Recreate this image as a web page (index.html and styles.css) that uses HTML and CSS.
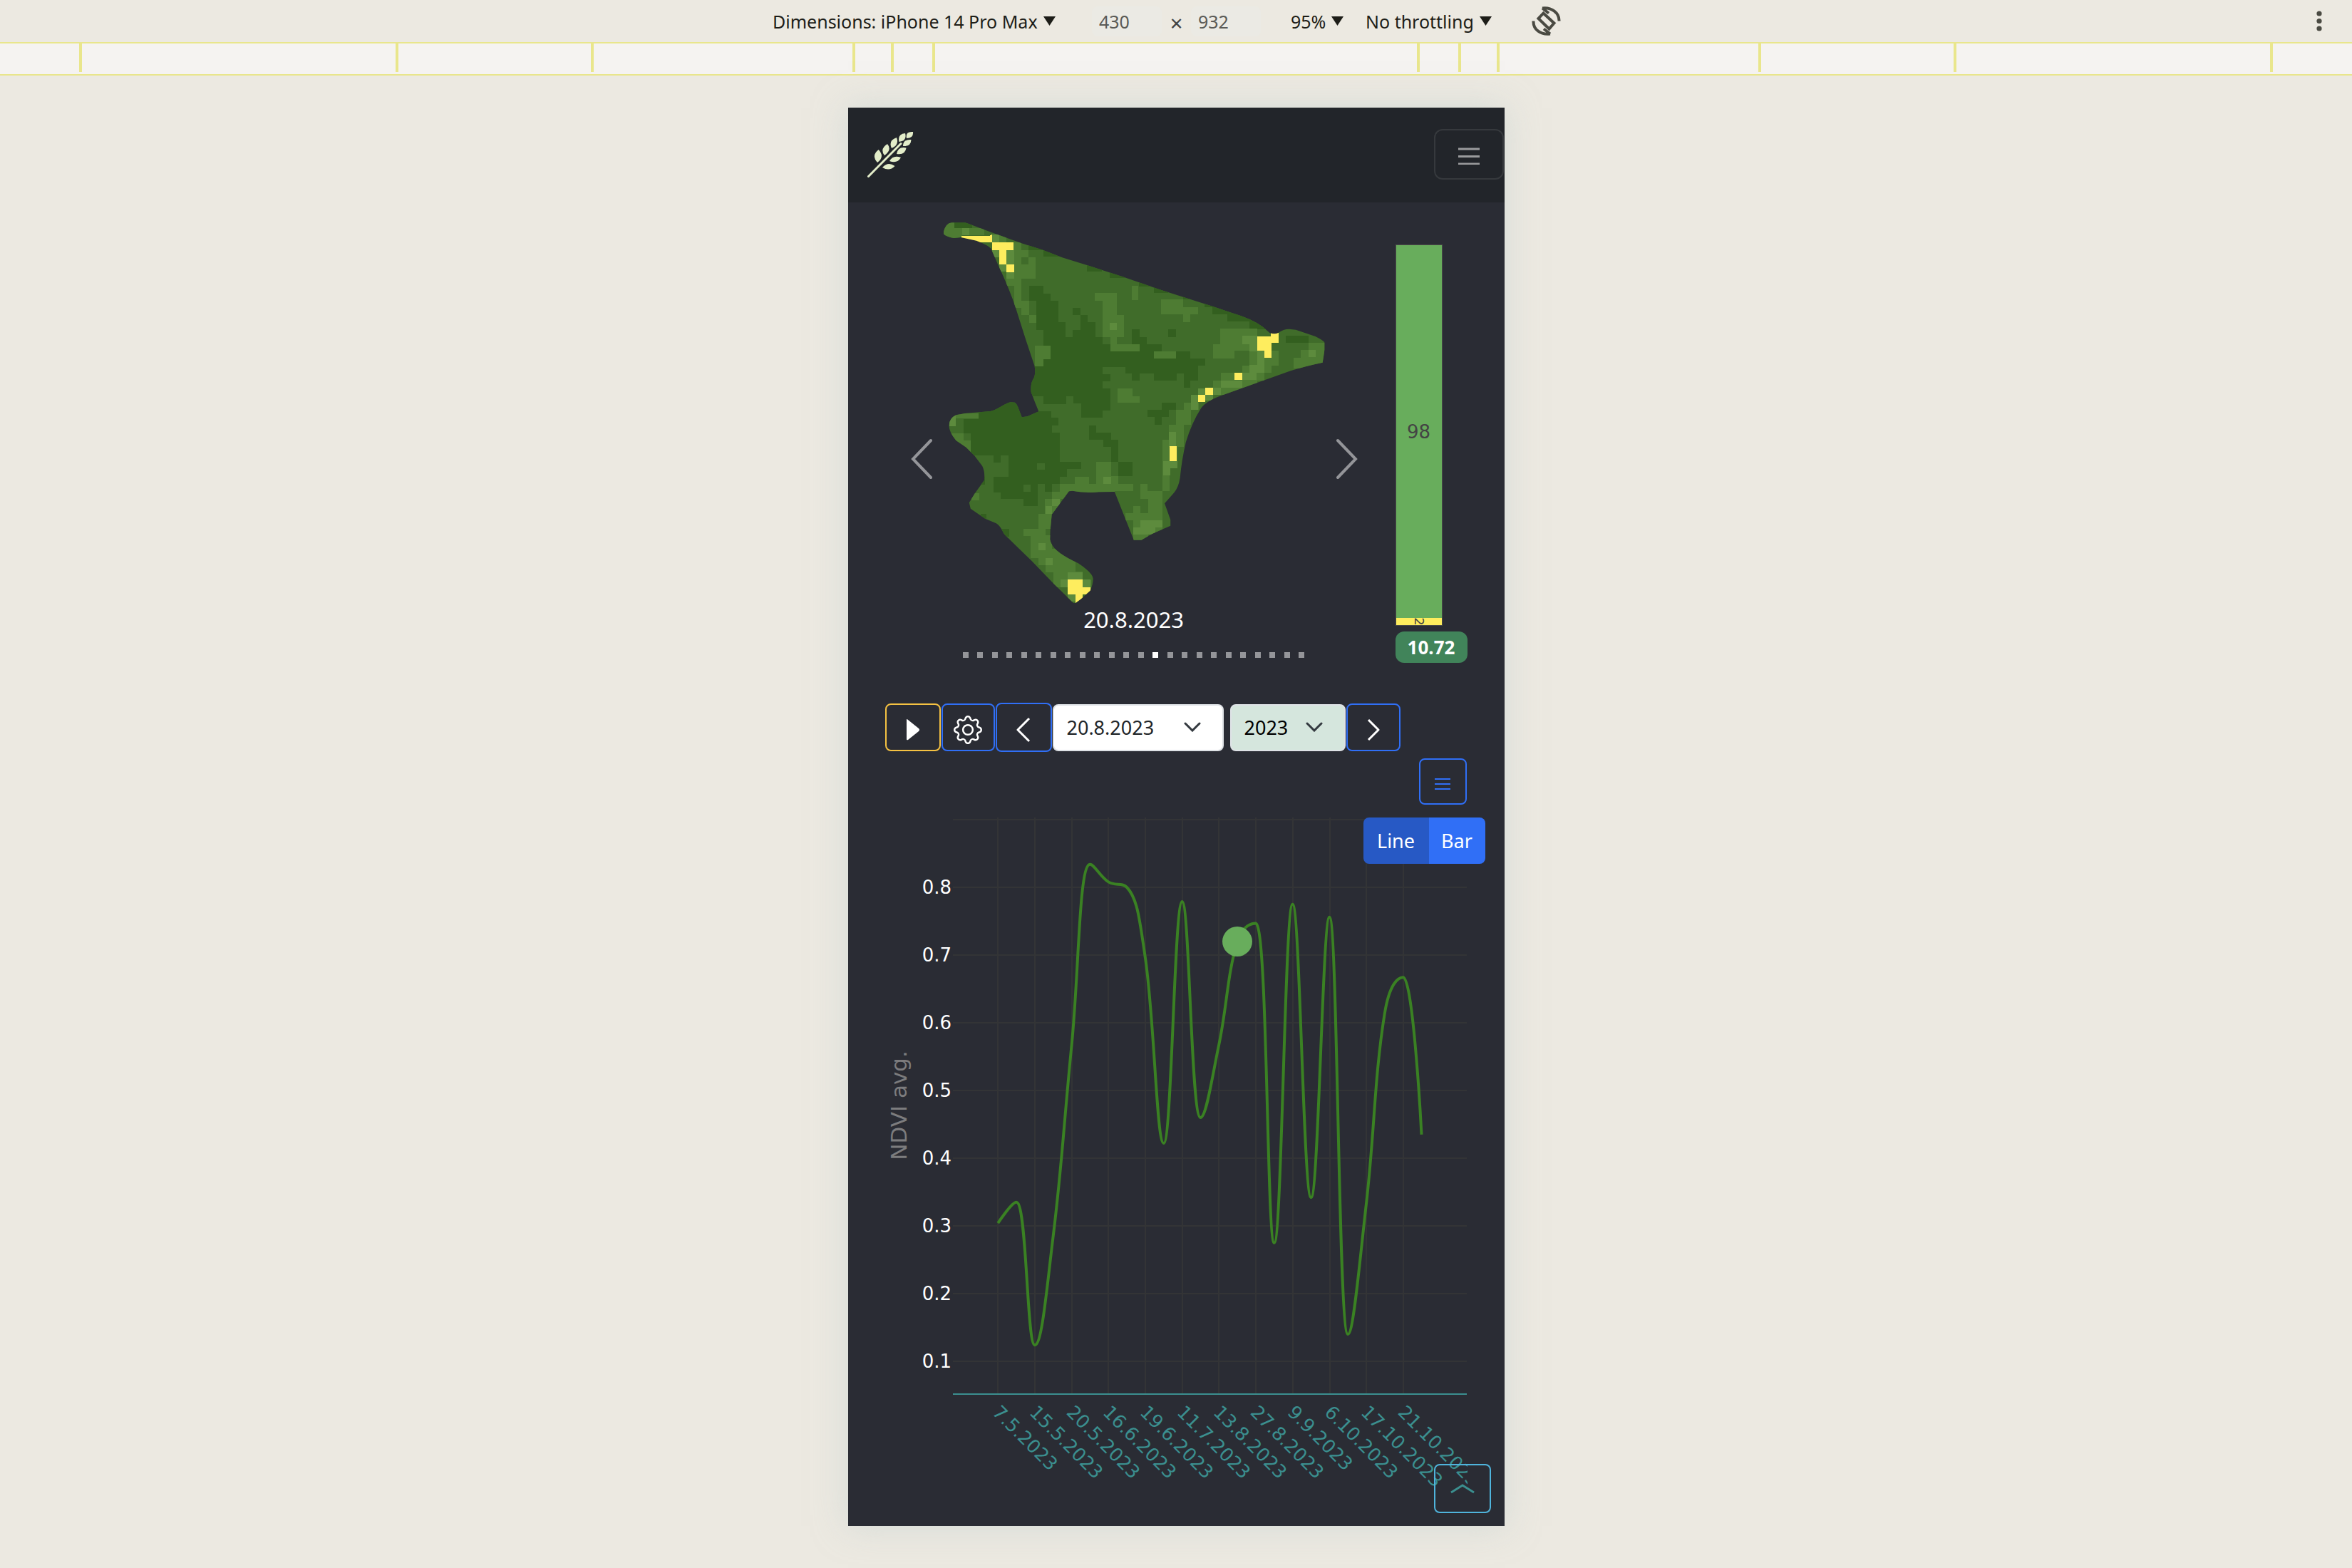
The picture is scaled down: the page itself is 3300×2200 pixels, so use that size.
FILE: index.html
```html
<!DOCTYPE html>
<html lang="en">
<head>
<meta charset="utf-8">
<title>Field NDVI</title>
<link rel="stylesheet" href="styles.css">
</head>
<body>
<div class="toolbar">
  <div class="toolbar-group">
    <button class="tool tool-device" type="button">Dimensions: iPhone 14 Pro Max<svg class="caret" viewBox="0 0 17 13"><path d="M0 0H17L8.500 13Z"/></svg></button>
    <input class="dim" type="text" value="430" aria-label="Width">
    <span class="times">×</span>
    <input class="dim" type="text" value="932" aria-label="Height">
    <button class="tool tool-zoom" type="button">95%<svg class="caret" viewBox="0 0 17 13"><path d="M0 0H17L8.500 13Z"/></svg></button>
    <button class="tool tool-throttle" type="button">No throttling<svg class="caret" viewBox="0 0 17 13"><path d="M0 0H17L8.500 13Z"/></svg></button>
    <button class="tool" type="button" aria-label="Rotate"><svg class="rotate" viewBox="0 0 41 41"><path d="M16.500 9.500L31.500 23.500L24.500 31.500L9.500 17Z M15 2.500C28 1 39 9 38.500 20.500M24 9.500L15 2.500 M26 38.500C12 40 2 32 2.500 20.500M17 31.500L26 38.500"/></svg></button>
  </div>
  <button class="tool tool-more" type="button" aria-label="More options"><svg class="dots" viewBox="0 0 8 30"><circle cx="4" cy="4" r="3.600"/><circle cx="4" cy="14.500" r="3.600"/><circle cx="4" cy="25" r="3.600"/></svg></button>
</div>
<div class="ruler">
  <span class="seg seg-start"></span><span class="seg seg-b"></span><span class="seg seg-c"></span><span class="seg seg-d"></span><span class="seg seg-e"></span><span class="seg seg-f"></span><span class="seg seg-e"></span><span class="seg seg-d"></span><span class="seg seg-c"></span><span class="seg seg-b"></span><span class="seg seg-end"></span>
</div>

<div class="device">
  <header class="navbar">
    <a href="#" class="brand" aria-label="Home">
      <svg class="logo" viewBox="0 0 66 66">
        <path d="M1.500 63.500L47 17.500" fill="none" stroke="#e3edc9" stroke-width="3" stroke-linecap="round"/>
        <path d="M14 44Q5 34 15.700 26Q25 36 14 44Z M24 34Q17 25 28 18Q35 26 24 34Z M34 24Q29 13 41 9Q45 20 34 24Z M44.500 15Q42 4 53 3Q56 14 44.500 15Z M55 10Q53 0 64 1Q65 10 55 10Z"/>
        <path d="M50 21Q50 11 61.500 12Q61 22 50 21Z M41 32Q43 21 54.500 23.500Q53 34 41 32Z M31 42Q36 33 47 37Q42 46 31 42Z M21 51Q29 42 38.500 49Q31 57 21 51Z"/>
      </svg>
    </a>
    <button class="toggler" type="button" aria-label="Toggle navigation"><svg class="burger" viewBox="0 0 30 24"><path d="M0 2H30M0 12.500H30M0 23H30"/></svg></button>
  </header>

  <section class="overview">
    <button class="arrow" type="button" aria-label="Previous image"><svg viewBox="0 0 30 58"><path d="M28 3L3 29L28 55"/></svg></button>
    <figure class="slide">
      <svg class="field" viewBox="150 50 1323 1626" preserveAspectRatio="none">
        <defs><clipPath id="outline"><path d="M157 105Q165 68 185 66L232 66L320 106L425 153L495 180L565 213L650 245L780 297L900 348L1085 420L1150 447Q1215 470 1255 505L1278 530Q1295 538 1308 530Q1325 514 1345 514L1368 517L1435 545Q1455 556 1467 570L1467 600L1460 655Q1400 670 1350 690L1240 738L1110 795Q1055 820 1040 852Q1010 910 990 990Q975 1070 970 1140Q965 1180 950 1202L917 1248L937 1317L937 1342L875 1375L837 1402L811 1402L745 1199L690 1200Q650 1205 600 1195L588 1197L529 1295L524 1360L523 1400Q528 1430 555 1455Q580 1478 620 1500Q670 1540 671 1565Q671 1590 661 1615L630 1650L610 1668L604 1668L535 1585L460 1490L380 1395Q365 1380 360 1365Q350 1340 338 1332L300 1312L250 1270L245 1245L265 1205L297 1150Q300 1115 290 1090L262 1045L235 1012L200 983Q175 945 176 920Q176 890 200 876L235 868L318 860Q335 855 355 840Q378 823 388 822L402 823Q408 828 412 840L426 885L445 882L484 861Q470 820 458 780Q455 745 465 725Q475 705 470 670L440 560L405 425Q385 350 345 245L320 175Q312 162 270 142L217 128L192 131Q165 125 157 113Z"/></clipPath></defs>
        <g clip-path="url(#outline)">
          <path class="veg" d="M150 50H1480V1680H150Z"/>
          <path class="veg-dense" d="M451 333H500V365H526V396H551V486H577V548H602V518H628V456H653V486H679V548H704V578H730V608H881V638H955V608H1006V638H1057V668H1031V730H1006V760H983V702H958V730H881V702H830V730H805V702H781V673H704V704H730V733H704V765H730V857H704V888H630V827H604V798H579V829H501V798H440V672H501V640H526V583H501V518H476V396H451Z
            M805 516H830V547H856V578H906V608H830V578H805Z M602 425h25v31h-25Z M930 516h25v31h-25Z M500 165h51v45h-51Z M450 150h50v31h-50Z M651 230h51v41h-51Z M728 260h51v40h-51Z M828 300h51v34h-51Z M879 320h51v43h-51Z M980 363h75v27h-75Z M1055 390h51v31h-51Z M1080 423h52v29h-52Z M1132 440h77v42h-77Z M1208 450h60v65h-60Z M1334 541h77v31h-77Z M195 60h61v30h-61Z
            M906 823H957V853H931V885H906V916H883V885H858V855H906Z M656 920H681V950H733V980H757V1073H806V1134H757V1073H733V1010H707V980H656Z M757 1073H806V1134H757Z
            M277 800H440V861H528V888H553V921H530V951H556V1073H630V1104H581V1137H556V1167H530V1198H506V1167H481V1260H431V1230H354V1202H328V1170H285V1137H380V1046H354V1076H328V1046H251V953H225V893H277Z M328 1137H300V1170H328Z M285 1292h20v25h-20Z M345 1355h37v32h-37Z"/>
          <path class="veg" d="M479 1078h26v28h-26Z M431 1168h25v31h-25Z"/>
          <path class="veg-light" d="M150 60H195V90H297V119H220V150H150Z M348 119h25v31h-25Z M397 150H424V181H448V212H473V303H424V394H451V456H424V425H399V333H374V303H399Z M451 456h25v31h-25Z M470 583H526V640H501V671H470Z M676 363H752V456H778V547H752V578H730V547H704V394H676Z M805 331h22v62h-22Z M904 390H980V421H1031V453H1006V486H980V453H904Z M730 578h100v30h-100Z M881 608h74v30h-74Z M756 765H806V796H832V825H756Z M1107 513H1235V605H1158V638H1083V577H1107Z M1208 605H1309V668H1285V697H1260V730H1235V760H1200V790H1083V730H1110V697H1183V668H1208Z
            M983 823H1035V853H1008V917H983V1010H960V1100H935V1195H909V981H932V917H957V853H983Z M1411 572H1470V680H1360V636H1385V603H1411Z M200 868H277V890H200Z M180 953H225V984H251V1050H225V1010H180Z M254 1205h25v30h-25Z
            M506 1230H530V1198H556V1167H607V1137H656V1167H681V1073H733V1134H757V1165H808V1196H745V1210H588V1230H560V1292H506Z M483 1293H530V1355H508V1382H530V1440H560V1460H610V1535H636V1570H665V1620H583V1600H534V1538H508V1508H483V1478H457V1384H431V1355H483Z
            M833 1165H857V1197H909V1375H860V1405H808V1318H782V1290H808V1259H833V1290H860V1228H833Z"/>
          <path class="veg" d="M424 212h24v31h-24Z"/>
          <path class="veg-sparse" d="M220 90h25v29h-25Z M323 117h25v33h-25Z M323 181h26v31h-26Z M374 181h25v62h-25Z M349 242h25v31h-25Z M374 272h25v31h-25Z M728 487h25v30h-25Z M1183 543h52v34h-52Z M1208 577h27v30h-27Z M1235 605h25v93h-25Z M1208 666h50v31h-50Z M1183 697h50v30h-50Z M1110 730h75v30h-75Z M1083 760h27v30h-27Z M1031 765h26v28h-26Z M1057 792h26v22h-26Z M1008 792h25v61h-25Z M1411 603h26v30h-26Z M176 876h24v47h-24Z M932 948h25v62h-25Z M911 1070h50v31h-50Z M911 1100h25v31h-25Z M707 1137h25v30h-25Z M530 1230h26v30h-26Z M507 1260h23v32h-23Z M483 1415h25v30h-25Z M507 1478h25v30h-25Z M583 1538h53v31h-53Z M559 1569h25v32h-25Z M636 1569h25v31h-25Z M583 1631h27v31h-27Z M833 1318h76v30h-76Z M809 1349h76v30h-76Z"/>
          <path class="veg-none" d="M219 121H315L323 117V150H219Z M323 150H397V181H374V243H349V181H323Z M374 243h26v31h-26Z M1235 544H1283V525H1308V573H1285V635H1259V604H1235Z M1158 698h25v30h-25Z M1057 760h26v31h-26Z M1031 791h26v31h-26Z M935 1008h23v62h-23Z M583 1569H636V1600H661V1631H636V1670H610V1631H583Z"/>
        </g>
      </svg>
      <figcaption class="caption">20.8.2023</figcaption>
      <div class="indicators">
        <i></i><i></i><i></i><i></i><i></i><i></i><i></i><i></i><i></i><i></i><i></i><i></i><i></i><i class="active"></i><i></i><i></i><i></i><i></i><i></i><i></i><i></i><i></i><i></i><i></i>
      </div>
    </figure>
    <button class="arrow" type="button" aria-label="Next image"><svg viewBox="0 0 30 58"><path d="M2 3L27 29L2 55"/></svg></button>
    <div class="stats">
      <div class="stack">
        <div class="stack-high">98</div>
        <div class="stack-low"><span>2</span></div>
      </div>
      <span class="badge">10.72</span>
    </div>
  </section>

  <div class="controls">
    <button class="btn btn-play" type="button" aria-label="Play"><svg width="22" height="32" viewBox="0 0 22 32"><path d="M2 2Q2 0 4 2L19 14Q21 16 19 18L4 30Q2 31 2 29Z" fill="#fff"/></svg></button>
    <button class="btn btn-gear" type="button" aria-label="Settings"><svg width="40" height="40" viewBox="0 0 16 16" fill="#fff"><path d="M8 4.754a3.246 3.246 0 1 0 0 6.492 3.246 3.246 0 0 0 0-6.492zM5.754 8a2.246 2.246 0 1 1 4.492 0 2.246 2.246 0 0 1-4.492 0z"/><path d="M9.796 1.343c-.527-1.790-3.065-1.790-3.592 0l-.094.319a.873.873 0 0 1-1.255.520l-.292-.160c-1.640-.892-3.433.902-2.540 2.541l.159.292a.873.873 0 0 1-.520 1.255l-.319.094c-1.790.527-1.790 3.065 0 3.592l.319.094a.873.873 0 0 1 .520 1.255l-.160.292c-.892 1.640.901 3.434 2.541 2.540l.292-.159a.873.873 0 0 1 1.255.520l.094.319c.527 1.790 3.065 1.790 3.592 0l.094-.319a.873.873 0 0 1 1.255-.520l.292.160c1.640.893 3.434-.902 2.540-2.541l-.159-.292a.873.873 0 0 1 .520-1.255l.319-.094c1.790-.527 1.790-3.065 0-3.592l-.319-.094a.873.873 0 0 1-.520-1.255l.160-.292c.893-1.640-.902-3.433-2.541-2.540l-.292.159a.873.873 0 0 1-1.255-.520l-.094-.319zm-2.633.283c.246-.835 1.428-.835 1.674 0l.094.319a1.873 1.873 0 0 0 2.693 1.115l.291-.160c.764-.415 1.600.420 1.184 1.185l-.159.292a1.873 1.873 0 0 0 1.116 2.692l.318.094c.835.246.835 1.428 0 1.674l-.319.094a1.873 1.873 0 0 0-1.115 2.693l.160.291c.415.764-.420 1.600-1.185 1.184l-.291-.159a1.873 1.873 0 0 0-2.693 1.116l-.094.318c-.246.835-1.428.835-1.674 0l-.094-.319a1.873 1.873 0 0 0-2.692-1.115l-.292.160c-.764.415-1.600-.420-1.184-1.185l.159-.291A1.873 1.873 0 0 0 1.945 8.930l-.319-.094c-.835-.246-.835-1.428 0-1.674l.319-.094A1.873 1.873 0 0 0 3.060 4.377l-.160-.292c-.415-.764.420-1.600 1.185-1.184l.292.159a1.873 1.873 0 0 0 2.692-1.115l.094-.319z"/></svg></button>
    <button class="btn btn-prev" type="button" aria-label="Previous date"><svg class="chev" width="20" height="36" viewBox="0 0 20 36"><path d="M18 2L2 18L18 34"/></svg></button>
    <span class="select select-date"><select aria-label="Date"><option>20.8.2023</option></select><svg width="24" height="14" viewBox="0 0 24 14"><path d="M2 2L12 12L22 2"/></svg></span>
    <span class="select select-year"><select aria-label="Year"><option>2023</option></select><svg width="24" height="14" viewBox="0 0 24 14"><path d="M2 2L12 12L22 2"/></svg></span>
    <button class="btn btn-next" type="button" aria-label="Next date"><svg class="chev" width="18" height="32" viewBox="0 0 18 32"><path d="M2 2L16 16L2 30"/></svg></button>
  </div>
  <div class="menu-row">
    <button class="btn btn-menu" type="button" aria-label="Chart menu"><svg width="22" height="18" viewBox="0 0 22 18"><path d="M0 2H22M0 9H22M0 16H22" stroke="#306ff6" stroke-width="2"/></svg></button>
  </div>

  <section class="chart">
    <div class="switch">
      <button type="button" class="on" aria-pressed="true">Line</button><button type="button" aria-pressed="false">Bar</button>
    </div>
    <svg class="plot" viewBox="1242 1140 817 960">
      <path class="grid" d="M1337 1151H2058M1337 1246H2058M1337 1341H2058M1337 1436H2058M1337 1531H2058M1337 1626H2058M1337 1721H2058M1337 1816H2058M1337 1911H2058
        M1400 1148V1956M1452 1148V1956M1504 1148V1956M1555 1148V1956M1607 1148V1956M1659 1148V1956M1710 1148V1956M1762 1148V1956M1814 1148V1956M1866 1148V1956M1917 1148V1956M1969 1148V1956"/>
      <path class="axis" d="M1337 1957H2058"/>
      <g class="y-labels">
        <text x="1335" y="1255">0.8</text><text x="1335" y="1350">0.7</text><text x="1335" y="1445">0.6</text><text x="1335" y="1540">0.5</text><text x="1335" y="1635">0.4</text><text x="1335" y="1730">0.3</text><text x="1335" y="1825">0.2</text><text x="1335" y="1920">0.1</text>
      </g>
      <text class="y-title" transform="translate(1272 1552) rotate(-90)">NDVI avg.</text>
      <path class="series" id="series"/>
      <circle cx="1736" cy="1322" r="21" fill="#68ad5c"/>
      <g class="x-labels">
        <text transform="translate(1391 1984) rotate(45)">7.5.2023</text>
        <text transform="translate(1443 1984) rotate(45)">15.5.2023</text>
        <text transform="translate(1495 1984) rotate(45)">20.5.2023</text>
        <text transform="translate(1546 1984) rotate(45)">16.6.2023</text>
        <text transform="translate(1598 1984) rotate(45)">19.6.2023</text>
        <text transform="translate(1650 1984) rotate(45)">11.7.2023</text>
        <text transform="translate(1701 1984) rotate(45)">13.8.2023</text>
        <text transform="translate(1753 1984) rotate(45)">27.8.2023</text>
        <text transform="translate(1805 1984) rotate(45)">9.9.2023</text>
        <text transform="translate(1857 1984) rotate(45)">6.10.2023</text>
        <text transform="translate(1908 1984) rotate(45)">17.10.2023</text>
        <text transform="translate(1960 1984) rotate(45)">21.10.2023</text>
      </g>
    </svg>
  </section>
  <button class="to-top" type="button" aria-label="Back to top"><svg width="36" height="14" viewBox="0 0 36 14"><path d="M2 12L18 2L34 12"/></svg></button>
</div>
<script src="chart.js"></script>
</body>
</html>
```

FILE: styles.css
```css
* { box-sizing: border-box; }
body {
  margin: 0;
  min-height: 100vh;
  background: #ece9e1;
  font-family: "Noto Sans", "Open Sans", sans-serif;
  font-size: 28px;
  color: #fff;
}
button, input, select { font: inherit; color: inherit; margin: 0; }
button { padding: 0; border: 0; background: none; cursor: pointer; }
svg { display: block; flex: none; }

/* emulator toolbar */
.toolbar {
  position: relative;
  display: flex;
  justify-content: center;
  align-items: center;
  height: 59px;
  color: #1d1d18;
  font-size: 25px;
}
.toolbar-group { display: flex; align-items: center; padding-right: 26px; }
.tool { display: flex; align-items: center; gap: 8px; white-space: nowrap; }
.tool-device { width: 448px; }
.tool-zoom { width: 105px; margin-left: 42px; }
.tool-throttle { width: 233px; }
.caret { width: 17px; height: 13px; fill: #1d1d18; }
.dim {
  width: 98px;
  height: 42px;
  padding: 0 10px;
  border: 0;
  border-radius: 8px;
  background: #ebeae4;
  color: #5a5a56;
}
.times { width: 41px; text-align: center; color: #444; font-size: 31px; line-height: 36px; padding-top: 4px; }
.rotate { width: 41px; height: 41px; fill: none; stroke: #4a4a42; stroke-width: 4; }
.tool-more { position: absolute; right: 42px; }
.dots { width: 8px; height: 30px; fill: #4a4a42; }

.ruler {
  display: flex;
  justify-content: center;
  height: 47px;
  border: solid #e9e68c;
  border-width: 2px 0;
  background: #f5f3f1;
  overflow: hidden;
}
.seg { flex: none; height: 40px; border-right: 4px solid #e9e68c; }
.seg:first-child { border-left: 4px solid #e9e68c; }
.seg-start { width: 448px; }
.seg-b { width: 274px; }
.seg-c { width: 367px; }
.seg-d { width: 54px; }
.seg-e { width: 58px; }
.seg-f { width: 680px; }
.seg-end { width: 444px; }

/* emulated device */
.device {
  position: relative;
  width: 921px;
  max-width: 100%;
  margin: 45px auto 0;
  padding-bottom: 42px;
  background: #2a2c34;
  box-shadow: 0 0 44px rgba(190, 205, 205, .5);
}
.navbar {
  display: flex;
  justify-content: space-between;
  align-items: center;
  padding: 30px 1px 32px 27px;
  background: #22252a;
}
.logo { width: 66px; height: 66px; fill: #e3edc9; }
.toggler {
  display: flex;
  align-items: center;
  justify-content: center;
  width: 98px;
  height: 71px;
  border: 2px solid #36393d;
  border-radius: 12px;
}
.burger { width: 30px; height: 24px; stroke: #9a9b9d; stroke-width: 3; margin-top: 5px; }

.overview { display: flex; padding: 23px 0 0 88px; }
.arrow { width: 30px; }
.arrow svg { width: 30px; height: 58px; fill: none; stroke: #949599; stroke-width: 4; stroke-linecap: round; }
.slide { width: 540px; margin: 0 14px 0 13px; padding-bottom: 58px; }
.field { width: 540px; height: 542px; shape-rendering: crispEdges; }
.veg { fill: #406c2a; }
.veg-dense { fill: #335f1f; }
.veg-light { fill: #4e7c33; }
.veg-sparse { fill: #5d8b3d; }
.veg-none { fill: #feed5e; }
.caption { font-size: 31px; line-height: 40px; text-align: center; }
.indicators { display: flex; justify-content: space-between; width: 480px; margin: 26px auto 0; }
.indicators i { width: 8px; height: 8px; background: #949599; }
.indicators .active { background: #fff; }

.stats { padding-top: 36px; margin-left: 53px; }
.stack { width: 66px; height: 535px; display: flex; flex-direction: column; border: 1px solid #4a4a4a; color: #444; font: 26px "DejaVu Sans", sans-serif; }
.stack-high { flex: 1; display: flex; align-items: center; justify-content: center; background: #68ad5c; }
.stack-low { height: 10px; display: flex; align-items: center; justify-content: center; background: #feed5e; font-size: 18px; line-height: 20px; }
.stack-low span { transform: rotate(90deg); }
.badge {
  display: block;
  margin-top: 8px;
  width: 101px;
  border-radius: 12px;
  background: #41845a;
  font-size: 26px;
  font-weight: 700;
  line-height: 44px;
  text-align: center;
}

.controls { display: flex; align-items: center; gap: 1px; padding: 5px 0 0 52px; height: 74px; }
.btn { display: flex; align-items: center; justify-content: center; height: 67px; border: 2px solid #306ff6; border-radius: 8px; }
.btn svg { margin-top: 6px; }
.chev { fill: none; stroke: #fff; stroke-width: 3; stroke-linejoin: round; }
.btn-play { width: 78px; border-color: #f5c242; }
.btn-gear { width: 75px; }
.btn-prev { width: 79px; height: 69px; }
.btn-next { width: 76px; }
.select { position: relative; }
.select select {
  appearance: none;
  width: 100%;
  height: 66px;
  padding: 0 18px;
  border: 2px solid #dee2e6;
  border-radius: 8px;
  background: #fff;
  color: #212529;
  font-size: 27px;
}
.select svg { position: absolute; top: 25px; right: 32px; pointer-events: none; fill: none; stroke: #343a40; stroke-width: 3; stroke-linecap: round; }
.select-date { width: 240px; margin-right: 8px; }
.select-year { width: 162px; }
.select-year select { background: #d5e6dd; color: #000; }

.menu-row { display: flex; justify-content: flex-end; padding: 9px 53px 10px 0; }
.btn-menu { width: 67px; height: 65px; }

.chart { position: relative; padding-left: 52px; }
.plot { width: 817px; height: 960px; overflow: hidden; }
.switch { position: absolute; top: 8px; right: 27px; display: flex; border-radius: 8px; overflow: hidden; }
.switch button { width: 79px; line-height: 65px; background: #306ff6; font-size: 27px; }
.switch .on { width: 92px; background: #2759c5; }
.grid { stroke: #333436; stroke-width: 2; fill: none; }
.axis { stroke: #3b8f8f; stroke-width: 2; }
.series { stroke: #3a8123; stroke-width: 4; fill: none; stroke-linejoin: round; }
.y-labels { font: 26px "DejaVu Sans", sans-serif; fill: #fff; text-anchor: end; }
.y-title { font: 31px "DejaVu Sans", sans-serif; fill: #7c7c7e; text-anchor: middle; }
.x-labels { font: 26px "DejaVu Sans", sans-serif; fill: #3b8f8f; }

.to-top {
  position: absolute;
  right: 19px;
  bottom: 18px;
  display: flex;
  align-items: center;
  justify-content: center;
  width: 80px;
  height: 69px;
  border: 2px solid #4fb4dc;
  border-radius: 8px;
}
.to-top svg { fill: none; stroke: #3b8f8f; stroke-width: 3; }
```

FILE: chart.js
```js
// Smoothed NDVI curve: control points are kept inside the box of each segment.
var values = [0.304, 0.335, 0.124, 0.285, 0.567, 0.834, 0.808, 0.800, 0.696, 0.422, 0.779, 0.460,
  0.568, 0.720, 0.747, 0.275, 0.775, 0.342, 0.756, 0.140, 0.333, 0.614, 0.667, 0.435];
var pts = values.map(function (v, i) {
  return [1400.2 + i * 25.84, 1246 + (0.8 - v) * 950];
});
function clamp(v, a, b) {
  return Math.max(Math.min(a, b), Math.min(Math.max(a, b), v));
}
var d = 'M' + pts[0].join(' ');
var c0 = pts[0];
for (var i = 1; i < pts.length; i++) {
  var p = pts[i], prev = pts[i - 1], next = pts[i + 1];
  var c1 = p, n0 = p;
  if (next) {
    var l0 = Math.sqrt(Math.hypot(p[0] - prev[0], p[1] - prev[1]));
    var l1 = Math.sqrt(Math.hypot(next[0] - p[0], next[1] - p[1]));
    var r = l1 / (l0 + l1) / 2.4;
    n0 = [0, 1].map(function (k) {
      return clamp(p[k] + (next[k] - prev[k]) * r, p[k], next[k]);
    });
    c1 = [0, 1].map(function (k) {
      return clamp(p[k] - (n0[k] - p[k]) * l0 / l1, p[k], prev[k]);
    });
    n0 = [0, 1].map(function (k) {
      return p[k] + (p[k] - c1[k]) * l1 / l0;
    });
  }
  d += 'C' + [c0, c1, p].map(function (q) { return q[0].toFixed(1) + ' ' + q[1].toFixed(1); }).join(' ');
  c0 = n0;
}
document.getElementById('series').setAttribute('d', d);
```
